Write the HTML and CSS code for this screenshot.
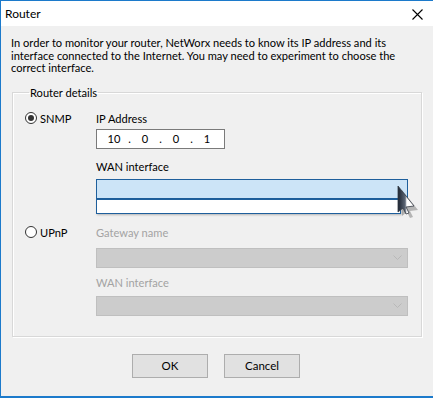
FILE: index.html
```html
<!DOCTYPE html>
<html lang="en">

<head>
    <meta charset="UTF-8">
    <title>Router</title>
    <link rel="stylesheet" href="styles.css">
</head>

<body>
    <div class="window">
        <div class="titlebar">
            <span class="title">Router</span>
            <svg class="close" width="11" height="11" viewBox="0 0 11 11">
                <path d="M0.5 0.5L10.5 10.5M10.5 0.5L0.5 10.5" stroke="#000" stroke-width="1.1" fill="none" />
            </svg>
        </div>

        <div class="dialog">
            <p class="intro">In order to monitor your router, NetWorx needs to know its IP address and its<br>
                interface connected to the Internet. You may need to experiment to choose the<br>
                correct interface.</p>

            <fieldset class="group">
                <legend>Router details</legend>

                <div class="mode mode-snmp">
                    <label class="radio"><span class="radio-dot checked"></span>SNMP</label>
                    <div class="fields">
                        <div class="field-label">IP Address</div>
                        <div class="ip-box">
                            <span class="octet">10</span><span class="ip-dot">.</span>
                            <span class="octet">0</span><span class="ip-dot">.</span>
                            <span class="octet">0</span><span class="ip-dot">.</span>
                            <span class="octet">1</span>
                        </div>
                        <div class="field-label label-wan">WAN interface</div>
                        <div class="combo combo-open">
                            <div class="droplist"></div>
                            <svg class="cursor" width="26" height="34" viewBox="0 0 26 34">
                                <defs>
                                    <linearGradient id="cur" x1="0" y1="0" x2="1" y2="0">
                                        <stop offset="0" stop-color="#1b2330" />
                                        <stop offset="0.45" stop-color="#5d6776" />
                                        <stop offset="0.55" stop-color="#ffffff" />
                                        <stop offset="1" stop-color="#ffffff" />
                                    </linearGradient>
                                </defs>
                                <path d="M5 4 L5 30 L10 26 L13 32 L16 31 L13 25 L21 24 Z" fill="#000" opacity="0.25" transform="translate(2 2)" />
                                <path d="M3 2 L3 28 L8 24 L11 30 L14 29 L11 23 L19 22 Z" fill="url(#cur)" stroke="#333a44" stroke-width="0.8" />
                            </svg>
                        </div>
                    </div>
                </div>

                <div class="mode mode-upnp">
                    <label class="radio"><span class="radio-dot"></span>UPnP</label>
                    <div class="fields">
                        <div class="field-label disabled">Gateway name</div>
                        <div class="combo combo-disabled">
                            <svg class="chevron" width="9" height="5" viewBox="0 0 9 5">
                                <path d="M0.5 0.5L4.5 4.5L8.5 0.5" stroke="#b8b8b8" fill="none" />
                            </svg>
                        </div>
                        <div class="field-label disabled label-wan2">WAN interface</div>
                        <div class="combo combo-disabled combo-last">
                            <svg class="chevron" width="9" height="5" viewBox="0 0 9 5">
                                <path d="M0.5 0.5L4.5 4.5L8.5 0.5" stroke="#b8b8b8" fill="none" />
                            </svg>
                        </div>
                    </div>
                </div>
            </fieldset>

            <div class="buttons">
                <button class="btn">OK</button>
                <button class="btn">Cancel</button>
            </div>
        </div>
    </div>
</body>

</html>
```

FILE: styles.css
```css
* {
    margin: 0;
    padding: 0;
    box-sizing: border-box;
}

body {
    background: #f0f0f0;
    font-family: Lato, "Noto Sans", sans-serif;
    font-size: 11.1px;
    color: #000;
}

.window {
    width: 433px;
    height: 398px;
    border-top: 1px solid #1c7acb;
    border-left: 1px solid #1c7acb;
    border-bottom: 2px solid #1c7acb;
    background: #f0f0f0;
    overflow: hidden;
}

.titlebar {
    height: 25px;
    background: #fff;
    display: flex;
    align-items: center;
    justify-content: space-between;
    padding: 0 10px 0 4px;
}

.title {
    line-height: 15px;
    font-size: 12px;
}

.close {
    display: block;
    margin-top: 1px;
}

.dialog {
    padding: 11px 11px 0 10px;
}

.intro {
    line-height: 12.6px;
    white-space: nowrap;
}

.group {
    margin: 10px 0 0 1px;
    width: 410px;
    height: 252px;
    border: 1px solid #d8d8d8;
    box-shadow: inset 1px 1px 0 #fff, 1px 1px 0 #fff;
    padding: 0 13px 0 12px;
}

.group legend {
    margin-left: 4px;
    padding: 0 1px;
    line-height: 15px;
}

.mode {
    display: grid;
    grid-template-columns: 71px 1fr;
}

.mode-snmp {
    padding-top: 11px;
}

.mode-upnp {
    padding-top: 26px;
}

.radio {
    display: flex;
    align-items: center;
    gap: 3px;
    height: 15px;
    line-height: 15px;
}

.radio-dot {
    width: 12px;
    height: 12px;
    border: 1px solid #333;
    border-radius: 50%;
    background: #fff;
    display: flex;
    align-items: center;
    justify-content: center;
}

.radio-dot.checked::after {
    content: '';
    width: 6px;
    height: 6px;
    border-radius: 50%;
    background: #333;
}

.field-label {
    line-height: 15px;
    height: 15px;
}

.field-label.disabled {
    color: #a3a3a3;
}

.ip-box {
    margin-top: 3px;
    width: 129px;
    height: 20px;
    border: 1px solid #7a7a7a;
    background: #fff;
    display: flex;
    align-items: center;
    padding-left: 6px;
    line-height: 15px;
}

.octet {
    width: 22px;
    text-align: center;
}

.ip-dot {
    width: 9px;
    text-align: center;
}

.label-wan {
    margin-top: 10px;
}

.combo {
    position: relative;
    height: 20px;
    margin-top: 5px;
}

.combo-open {
    background: #cce4f7;
    border: 1px solid #1e5f9c;
}

.droplist {
    position: absolute;
    top: 19px;
    left: -1px;
    width: 305px;
    height: 15px;
    background: #fff;
    border: 1px solid #1e5f9c;
    box-shadow: 1px 1px 2px rgba(0, 0, 0, 0.25);
}

.cursor {
    position: absolute;
    right: -14px;
    top: 4px;
}

.combo-disabled {
    margin-top: 8px;
    background: #cccccc;
    border: 1px solid #bfbfbf;
    display: flex;
    align-items: center;
    justify-content: flex-end;
    padding-right: 5px;
}

.label-wan2 {
    margin-top: 7px;
}

.combo-last {
    margin-top: 6px;
}

.buttons {
    display: flex;
    justify-content: center;
    gap: 16px;
    margin-top: 17px;
    padding-right: 1px;
}

.btn {
    width: 76px;
    height: 24px;
    background: #e1e1e1;
    border: 1px solid #adadad;
    font-family: inherit;
    font-size: 11.5px;
    color: #000;
}
```
